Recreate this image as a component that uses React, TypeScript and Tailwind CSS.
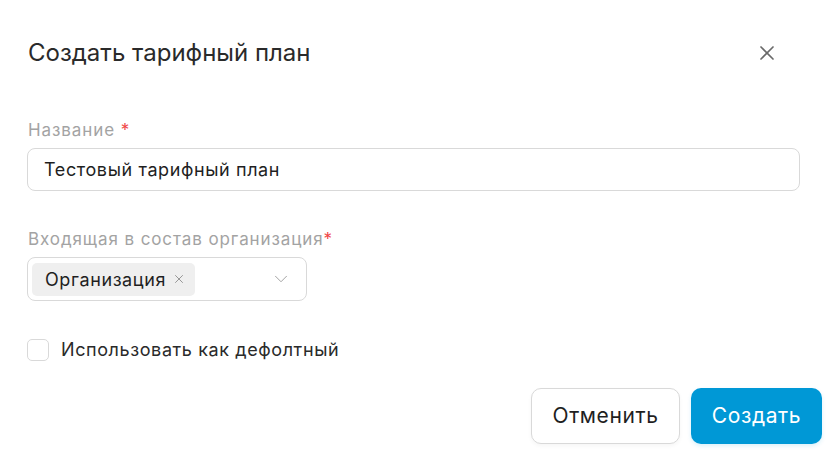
import { X, ChevronDown } from "lucide-react";

export default function App() {
  return (
    <div className="w-[829px] h-[451px] bg-white font-['Inter',sans-serif] text-[#222]">
      {/* Header */}
      <div className="flex items-center justify-between pl-[28px] pr-[50px] pt-[35px] h-[70px]">
        <h1 className="text-[24px] font-normal text-[#2a2a2a] leading-[30px]">Создать тарифный план</h1>
        <button className="text-[#6a6a6a]">
          <X size={24} strokeWidth={1.7} />
        </button>
      </div>

      {/* Name */}
      <div className="pl-[27px] pr-[29px] mt-[50px]">
        <label className="block text-[17px] tracking-[0.9px] leading-[20px] text-[#a3a3a3] pl-[1px]">
          Название <span className="text-[#f04646]">*</span>
        </label>
        <div className="mt-[8px] h-[43px] border border-[#d9d9d9] rounded-[8px] flex items-center px-[16px] text-[18px] tracking-[0.6px] text-[#1f1f1f]">
          Тестовый тарифный план
        </div>
      </div>

      {/* Organization */}
      <div className="pl-[27px] mt-[38px]">
        <label className="block text-[17px] tracking-[0.9px] leading-[20px] text-[#a3a3a3] pl-[1px]">
          Входящая в состав организация<span className="text-[#f04646]">*</span>
        </label>
        <div className="mt-[8px] w-[280px] h-[44px] border border-[#d9d9d9] rounded-[8px] flex items-center pl-[4px] pr-[14px]">
          <span className="flex items-center gap-[6px] h-[33px] bg-[#efefef] rounded-[5px] pl-[13px] pr-[9px] text-[18px] tracking-[0.6px] text-[#1f1f1f]">
            Организация
            <X size={14} strokeWidth={1.5} className="text-[#8a8a8a]" />
          </span>
          <ChevronDown size={22} strokeWidth={1} className="ml-auto text-[#9a9a9a]" />
        </div>
      </div>

      {/* Checkbox */}
      <div className="pl-[27px] mt-[35px] flex items-center gap-[12px]">
        <span className="w-[22px] h-[22px] border border-[#d9d9d9] rounded-[5px] bg-white" />
        <span className="text-[18px] tracking-[0.6px] text-[#2a2a2a]">Использовать как дефолтный</span>
      </div>

      {/* Footer */}
      <div className="flex justify-end gap-[11px] pr-[7px] mt-[25px]">
        <button className="w-[149px] h-[56px] border border-[#d9d9d9] rounded-[10px] bg-white text-[21px] tracking-[0.6px] text-[#1f1f1f] shadow-[0_2px_4px_rgba(0,0,0,0.04)]">
          Отменить
        </button>
        <button className="w-[131px] h-[56px] rounded-[10px] bg-[#0098d6] text-[21px] tracking-[0.6px] text-white shadow-[0_2px_4px_rgba(0,152,214,0.15)]">
          Создать
        </button>
      </div>
    </div>
  );
}
